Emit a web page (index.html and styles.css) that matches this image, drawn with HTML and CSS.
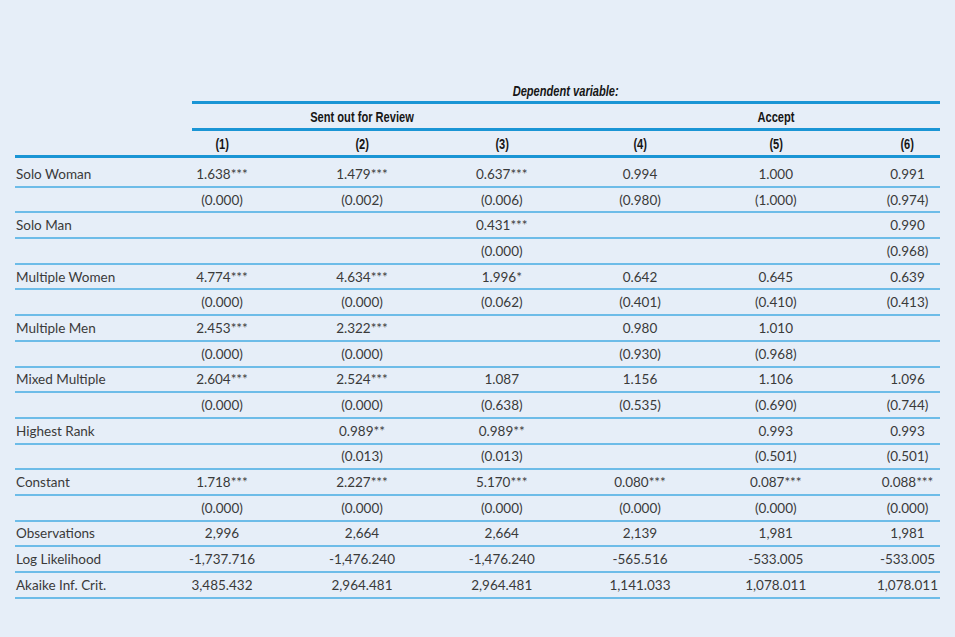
FILE: index.html
```html
<!DOCTYPE html>
<html lang="en">
<head>
<meta charset="utf-8">
<title>Regression table</title>
<link rel="stylesheet" href="styles.css">
</head>
<body>
<main class="table">
  <div class="dep"><span class="cond">Dependent variable:</span></div>
  <div class="grid groups">
    <div class="group-review"><span class="cond">Sent out for Review</span></div>
    <div class="group-accept"><span class="cond">Accept</span></div>
  </div>
  <div class="rule-indent"></div>
  <div class="grid nums">
    <div></div><div><span class="cond">(1)</span></div><div><span class="cond">(2)</span></div><div><span class="cond">(3)</span></div><div><span class="cond">(4)</span></div><div><span class="cond">(5)</span></div><div class="last"><span class="cond">(6)</span></div>
  </div>
  <div class="body">
    <div class="grid row"><div class="lbl">Solo Woman</div><div>1.638***</div><div>1.479***</div><div>0.637***</div><div>0.994</div><div>1.000</div><div class="last">0.991</div></div>
    <div class="grid row"><div class="lbl"></div><div>(0.000)</div><div>(0.002)</div><div>(0.006)</div><div>(0.980)</div><div>(1.000)</div><div class="last">(0.974)</div></div>
    <div class="grid row"><div class="lbl">Solo Man</div><div></div><div></div><div>0.431***</div><div></div><div></div><div class="last">0.990</div></div>
    <div class="grid row"><div class="lbl"></div><div></div><div></div><div>(0.000)</div><div></div><div></div><div class="last">(0.968)</div></div>
    <div class="grid row"><div class="lbl">Multiple Women</div><div>4.774***</div><div>4.634***</div><div>1.996*</div><div>0.642</div><div>0.645</div><div class="last">0.639</div></div>
    <div class="grid row"><div class="lbl"></div><div>(0.000)</div><div>(0.000)</div><div>(0.062)</div><div>(0.401)</div><div>(0.410)</div><div class="last">(0.413)</div></div>
    <div class="grid row"><div class="lbl">Multiple Men</div><div>2.453***</div><div>2.322***</div><div></div><div>0.980</div><div>1.010</div><div class="last"></div></div>
    <div class="grid row"><div class="lbl"></div><div>(0.000)</div><div>(0.000)</div><div></div><div>(0.930)</div><div>(0.968)</div><div class="last"></div></div>
    <div class="grid row"><div class="lbl">Mixed Multiple</div><div>2.604***</div><div>2.524***</div><div>1.087</div><div>1.156</div><div>1.106</div><div class="last">1.096</div></div>
    <div class="grid row"><div class="lbl"></div><div>(0.000)</div><div>(0.000)</div><div>(0.638)</div><div>(0.535)</div><div>(0.690)</div><div class="last">(0.744)</div></div>
    <div class="grid row"><div class="lbl">Highest Rank</div><div></div><div>0.989**</div><div>0.989**</div><div></div><div>0.993</div><div class="last">0.993</div></div>
    <div class="grid row"><div class="lbl"></div><div></div><div>(0.013)</div><div>(0.013)</div><div></div><div>(0.501)</div><div class="last">(0.501)</div></div>
    <div class="grid row"><div class="lbl">Constant</div><div>1.718***</div><div>2.227***</div><div>5.170***</div><div>0.080***</div><div>0.087***</div><div class="last">0.088***</div></div>
    <div class="grid row"><div class="lbl"></div><div>(0.000)</div><div>(0.000)</div><div>(0.000)</div><div>(0.000)</div><div>(0.000)</div><div class="last">(0.000)</div></div>
    <div class="grid row"><div class="lbl">Observations</div><div>2,996</div><div>2,664</div><div>2,664</div><div>2,139</div><div>1,981</div><div class="last">1,981</div></div>
    <div class="grid row"><div class="lbl">Log Likelihood</div><div>-1,737.716</div><div>-1,476.240</div><div>-1,476.240</div><div>-565.516</div><div>-533.005</div><div class="last">-533.005</div></div>
    <div class="grid row"><div class="lbl">Akaike Inf. Crit.</div><div>3,485.432</div><div>2,964.481</div><div>2,964.481</div><div>1,141.033</div><div>1,078.011</div><div class="last">1,078.011</div></div>
  </div>
</main>
</body>
</html>
```
FILE: styles.css
```css
html, body {
  margin: 0;
  padding: 0;
}
body {
  background: #e6eef8;
  width: 955px;
  height: 637px;
  overflow: hidden;
  font-family: Lato, "Open Sans", "Liberation Sans", sans-serif;
  font-size: 13.5px;
  color: #3a3a3a;
}
.table {
  margin: 79px 0 0 15px;
  width: 925px;
}
.grid {
  display: grid;
  grid-template-columns: 137px 140px 140px 139.5px 137px 134.5px 97px;
  align-items: center;
  text-align: center;
}
.grid .last {
  padding-left: 32px;
}
.dep,
.groups,
.nums {
  font-family: "Liberation Sans", Arial, sans-serif;
  font-weight: bold;
  font-size: 15px;
  color: #161616;
}
.cond {
  display: inline-block;
  transform: scaleX(0.74);
  white-space: nowrap;
}
.dep {
  margin-left: 177px;
  height: 22px;
  display: flex;
  align-items: center;
  justify-content: center;
  font-style: italic;
  border-bottom: 3px solid #1a95d5;
}
.groups {
  height: 24px;
}
.group-review {
  grid-column: 2 / 5;
}
.group-accept {
  grid-column: 6 / 7;
}
.rule-indent {
  margin-left: 177px;
  height: 3px;
  background: #1a95d5;
}
.nums {
  height: 24px;
  border-bottom: 3px solid #1a95d5;
}
.body {
  padding-top: 4px;
}
.row {
  height: 23.7px;
  border-bottom: 2px solid #6dbce8;
}
.row .lbl {
  text-align: left;
  padding-left: 1px;
}
```
